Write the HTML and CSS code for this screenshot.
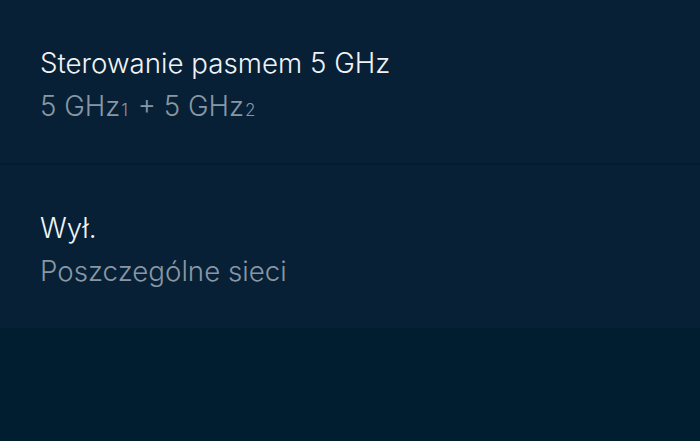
FILE: index.html
```html
<!DOCTYPE html>
<html lang="pl">
<head>
<meta charset="utf-8">
<link rel="stylesheet" href="styles.css">
</head>
<body>
<div class="list">
  <div class="item">
    <div class="title">Sterowanie pasmem 5 GHz</div>
    <div class="sub">5 GHz<span class="idx">1</span> + 5 GHz<span class="idx">2</span></div>
  </div>
  <div class="item">
    <div class="title">Wył.</div>
    <div class="sub">Poszczególne sieci</div>
  </div>
</div>
</body>
</html>
```
FILE: styles.css
```css
html, body {
  margin: 0;
  padding: 0;
  background: #001e30;
  height: 100%;
}
body {
  font-family: "Inter", "Roboto", sans-serif;
  -webkit-font-smoothing: antialiased;
}
.list {
  display: flex;
  flex-direction: column;
  gap: 2px;
  background: #061c2e;
}
.item {
  background: #072035;
  height: 163px;
  padding: 47px 40px 0;
  box-sizing: border-box;
  display: flex;
  flex-direction: column;
  gap: 11px;
}
.title {
  color: #f0f3f5;
  font-size: 27.7px;
  font-weight: 300;
  line-height: 32px;
}
.sub {
  color: #8797a5;
  font-size: 27.7px;
  font-weight: 300;
  line-height: 32px;
}
.idx {
  font-size: 17px;
  margin: 0 2px 0 1px;
}
```
